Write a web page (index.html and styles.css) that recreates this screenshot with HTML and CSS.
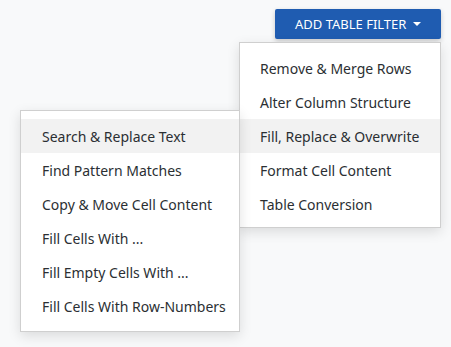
FILE: index.html
```html
<!DOCTYPE html>
<html>
<head>
<meta charset="utf-8">
<link rel="stylesheet" href="styles.css">
</head>
<body>
<div class="toolbar">
  <div class="dropdown">
    <button class="btn">ADD TABLE FILTER<span class="caret"></span></button>
    <ul class="menu main-menu">
      <li class="item">Remove &amp; Merge Rows</li>
      <li class="item">Alter Column Structure</li>
      <li class="item active">Fill, Replace &amp; Overwrite</li>
      <li class="item">Format Cell Content</li>
      <li class="item">Table Conversion</li>
    </ul>
    <ul class="menu sub-menu">
      <li class="item active">Search &amp; Replace Text</li>
      <li class="item">Find Pattern Matches</li>
      <li class="item">Copy &amp; Move Cell Content</li>
      <li class="item">Fill Cells With ...</li>
      <li class="item">Fill Empty Cells With ...</li>
      <li class="item">Fill Cells With Row-Numbers</li>
    </ul>
  </div>
</div>
</body>
</html>
```
FILE: styles.css
```css
html, body {
  margin: 0;
  padding: 0;
}
body {
  background: #f8f9fa;
  font-family: "Noto Sans", "Open Sans", sans-serif;
  width: 451px;
  height: 347px;
  overflow: hidden;
}
.toolbar {
  display: flex;
  justify-content: flex-end;
  padding: 9px 10px 0 0;
}
.dropdown {
  position: relative;
}
.btn {
  display: flex;
  align-items: center;
  height: 30px;
  width: 166px;
  box-sizing: border-box;
  padding: 0 0 0 20px;
  margin: 0;
  border: none;
  border-radius: 2px;
  background: #1f5cb1;
  color: #fff;
  font-family: inherit;
  font-size: 13px;
  box-shadow: 0 2px 5px rgba(0,0,0,0.2);
}
.caret {
  display: inline-block;
  margin-left: 7px;
  border-left: 4.5px solid transparent;
  border-right: 4.5px solid transparent;
  border-top: 4.5px solid #fff;
}
.menu {
  list-style: none;
  margin: 0;
  padding: 8px 0 6px;
  background: #fff;
  border: 1px solid #cfcfcf;
  box-shadow: 0 4px 12px rgba(0,0,0,0.12);
  position: absolute;
  box-sizing: border-box;
}
.main-menu {
  top: 33px;
  right: 0;
  width: 202px;
}
.sub-menu {
  top: 101px;
  left: -255px;
  width: 220px;
  padding-bottom: 8px;
}
.item {
  height: 34px;
  display: flex;
  align-items: center;
  font-size: 14px;
  color: #2b2f33;
  white-space: nowrap;
}
.main-menu .item {
  padding-left: 20px;
}
.sub-menu .item {
  padding-left: 21px;
}
.item.active {
  background: #f2f2f2;
}
```
